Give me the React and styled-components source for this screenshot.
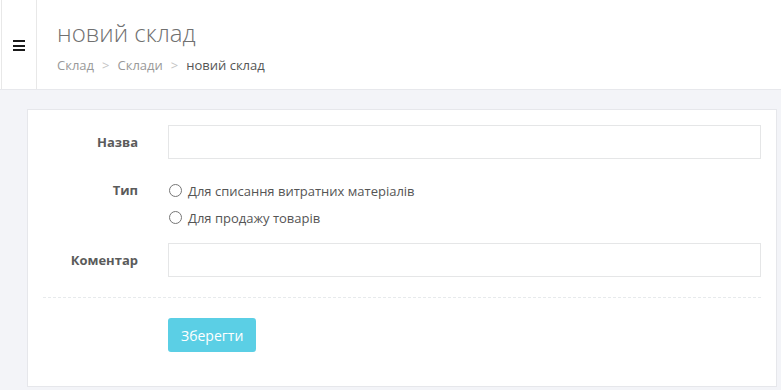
import React from 'react';
import styled, { createGlobalStyle } from 'styled-components';

const GlobalStyle = createGlobalStyle`
  html, body {
    margin: 0;
    padding: 0;
    background: #f3f4f8;
  }
  body {
    font-family: 'Open Sans', 'Liberation Sans', sans-serif;
    color: #555;
  }
`;

const Page = styled.div`
  width: 781px;
  height: 390px;
  display: flex;
  flex-direction: column;
  background: #f3f4f8;
  overflow: hidden;
`;

const Header = styled.header`
  display: flex;
  height: 89px;
  background: #fff;
  border-bottom: 1px solid #e7e8ec;
`;

const Toggle = styled.div`
  width: 34px;
  margin-left: 1px;
  border-left: 1px solid #e8e8e8;
  border-right: 1px solid #e8e8e8;
  display: flex;
  align-items: center;
  justify-content: center;
`;

const Burger = styled.div`
  display: flex;
  flex-direction: column;
  gap: 2.5px;
  width: 12px;
  margin-top: 2px;

  span {
    display: block;
    height: 2px;
    background: #1a1a1a;
  }
`;

const TitleBlock = styled.div`
  padding: 16px 0 0 20px;
`;

const Title = styled.h1`
  margin: 0;
  font-size: 24px;
  font-weight: 300;
  color: #707070;
  line-height: 33px;
`;

const Crumbs = styled.div`
  margin-top: 7px;
  font-size: 13px;
  line-height: 18px;
  display: flex;
  gap: 8px;
`;

const Crumb = styled.span`
  color: ${p => (p.active ? '#555' : '#999')};
`;

const Sep = styled.span`
  color: #c4c4c4;
`;

const Content = styled.main`
  flex: 1;
  padding: 19px 4px 0 27px;
`;

const Card = styled.div`
  background: #fff;
  border: 1px solid #e6e7eb;
  padding: 15px 15px 34px 0;
`;

const Row = styled.div`
  display: grid;
  grid-template-columns: 110px 1fr;
  column-gap: 30px;
  align-items: ${p => (p.top ? 'start' : 'center')};
  margin-top: ${p => p.mt || 0}px;
`;

const Label = styled.label`
  text-align: right;
  font-size: 13px;
  font-weight: 700;
  color: #5b5b5b;
  line-height: 27px;
`;

const Input = styled.input`
  box-sizing: border-box;
  height: 34px;
  width: 100%;
  border: 1px solid #e5e6e7;
  background: #fff;
  outline: none;
  padding: 6px 12px;
`;

const Radios = styled.div`
  display: flex;
  flex-direction: column;
`;

const RadioLine = styled.label`
  display: flex;
  align-items: center;
  height: 27px;
  font-size: 13px;
  color: #555;
`;

const Circle = styled.span`
  box-sizing: border-box;
  width: 13px;
  height: 13px;
  margin: 0 6px 0 1px;
  border: 1px solid #767676;
  border-radius: 50%;
  background: #fff;
`;

const Divider = styled.div`
  margin: 20px 0 20px 15px;
  border-top: 1px dashed #e7eaec;
`;

const SaveButton = styled.button`
  height: 34px;
  padding: 0 13px;
  border: none;
  border-radius: 3px;
  background: #5bcfe5;
  color: #fff;
  font-family: 'Open Sans', 'Liberation Sans', sans-serif;
  font-size: 14px;
  cursor: pointer;
`;

const types = ['Для списання витратних матеріалів', 'Для продажу товарів'];

const App = () => {
  return (
    <Page>
      <GlobalStyle />
      <Header>
        <Toggle>
          <Burger>
            <span />
            <span />
            <span />
          </Burger>
        </Toggle>
        <TitleBlock>
          <Title>новий склад</Title>
          <Crumbs>
            <Crumb>Склад</Crumb>
            <Sep>&gt;</Sep>
            <Crumb>Склади</Crumb>
            <Sep>&gt;</Sep>
            <Crumb active>новий склад</Crumb>
          </Crumbs>
        </TitleBlock>
      </Header>
      <Content>
        <Card>
          <Row>
            <Label>Назва</Label>
            <Input type="text" />
          </Row>
          <Row top mt={18}>
            <Label>Тип</Label>
            <Radios>
              {types.map(t => (
                <RadioLine key={t}>
                  <Circle />
                  {t}
                </RadioLine>
              ))}
            </Radios>
          </Row>
          <Row mt={12}>
            <Label>Коментар</Label>
            <Input type="text" />
          </Row>
          <Divider />
          <Row>
            <span />
            <div>
              <SaveButton>Зберегти</SaveButton>
            </div>
          </Row>
        </Card>
      </Content>
    </Page>
  );
};

export default App;
